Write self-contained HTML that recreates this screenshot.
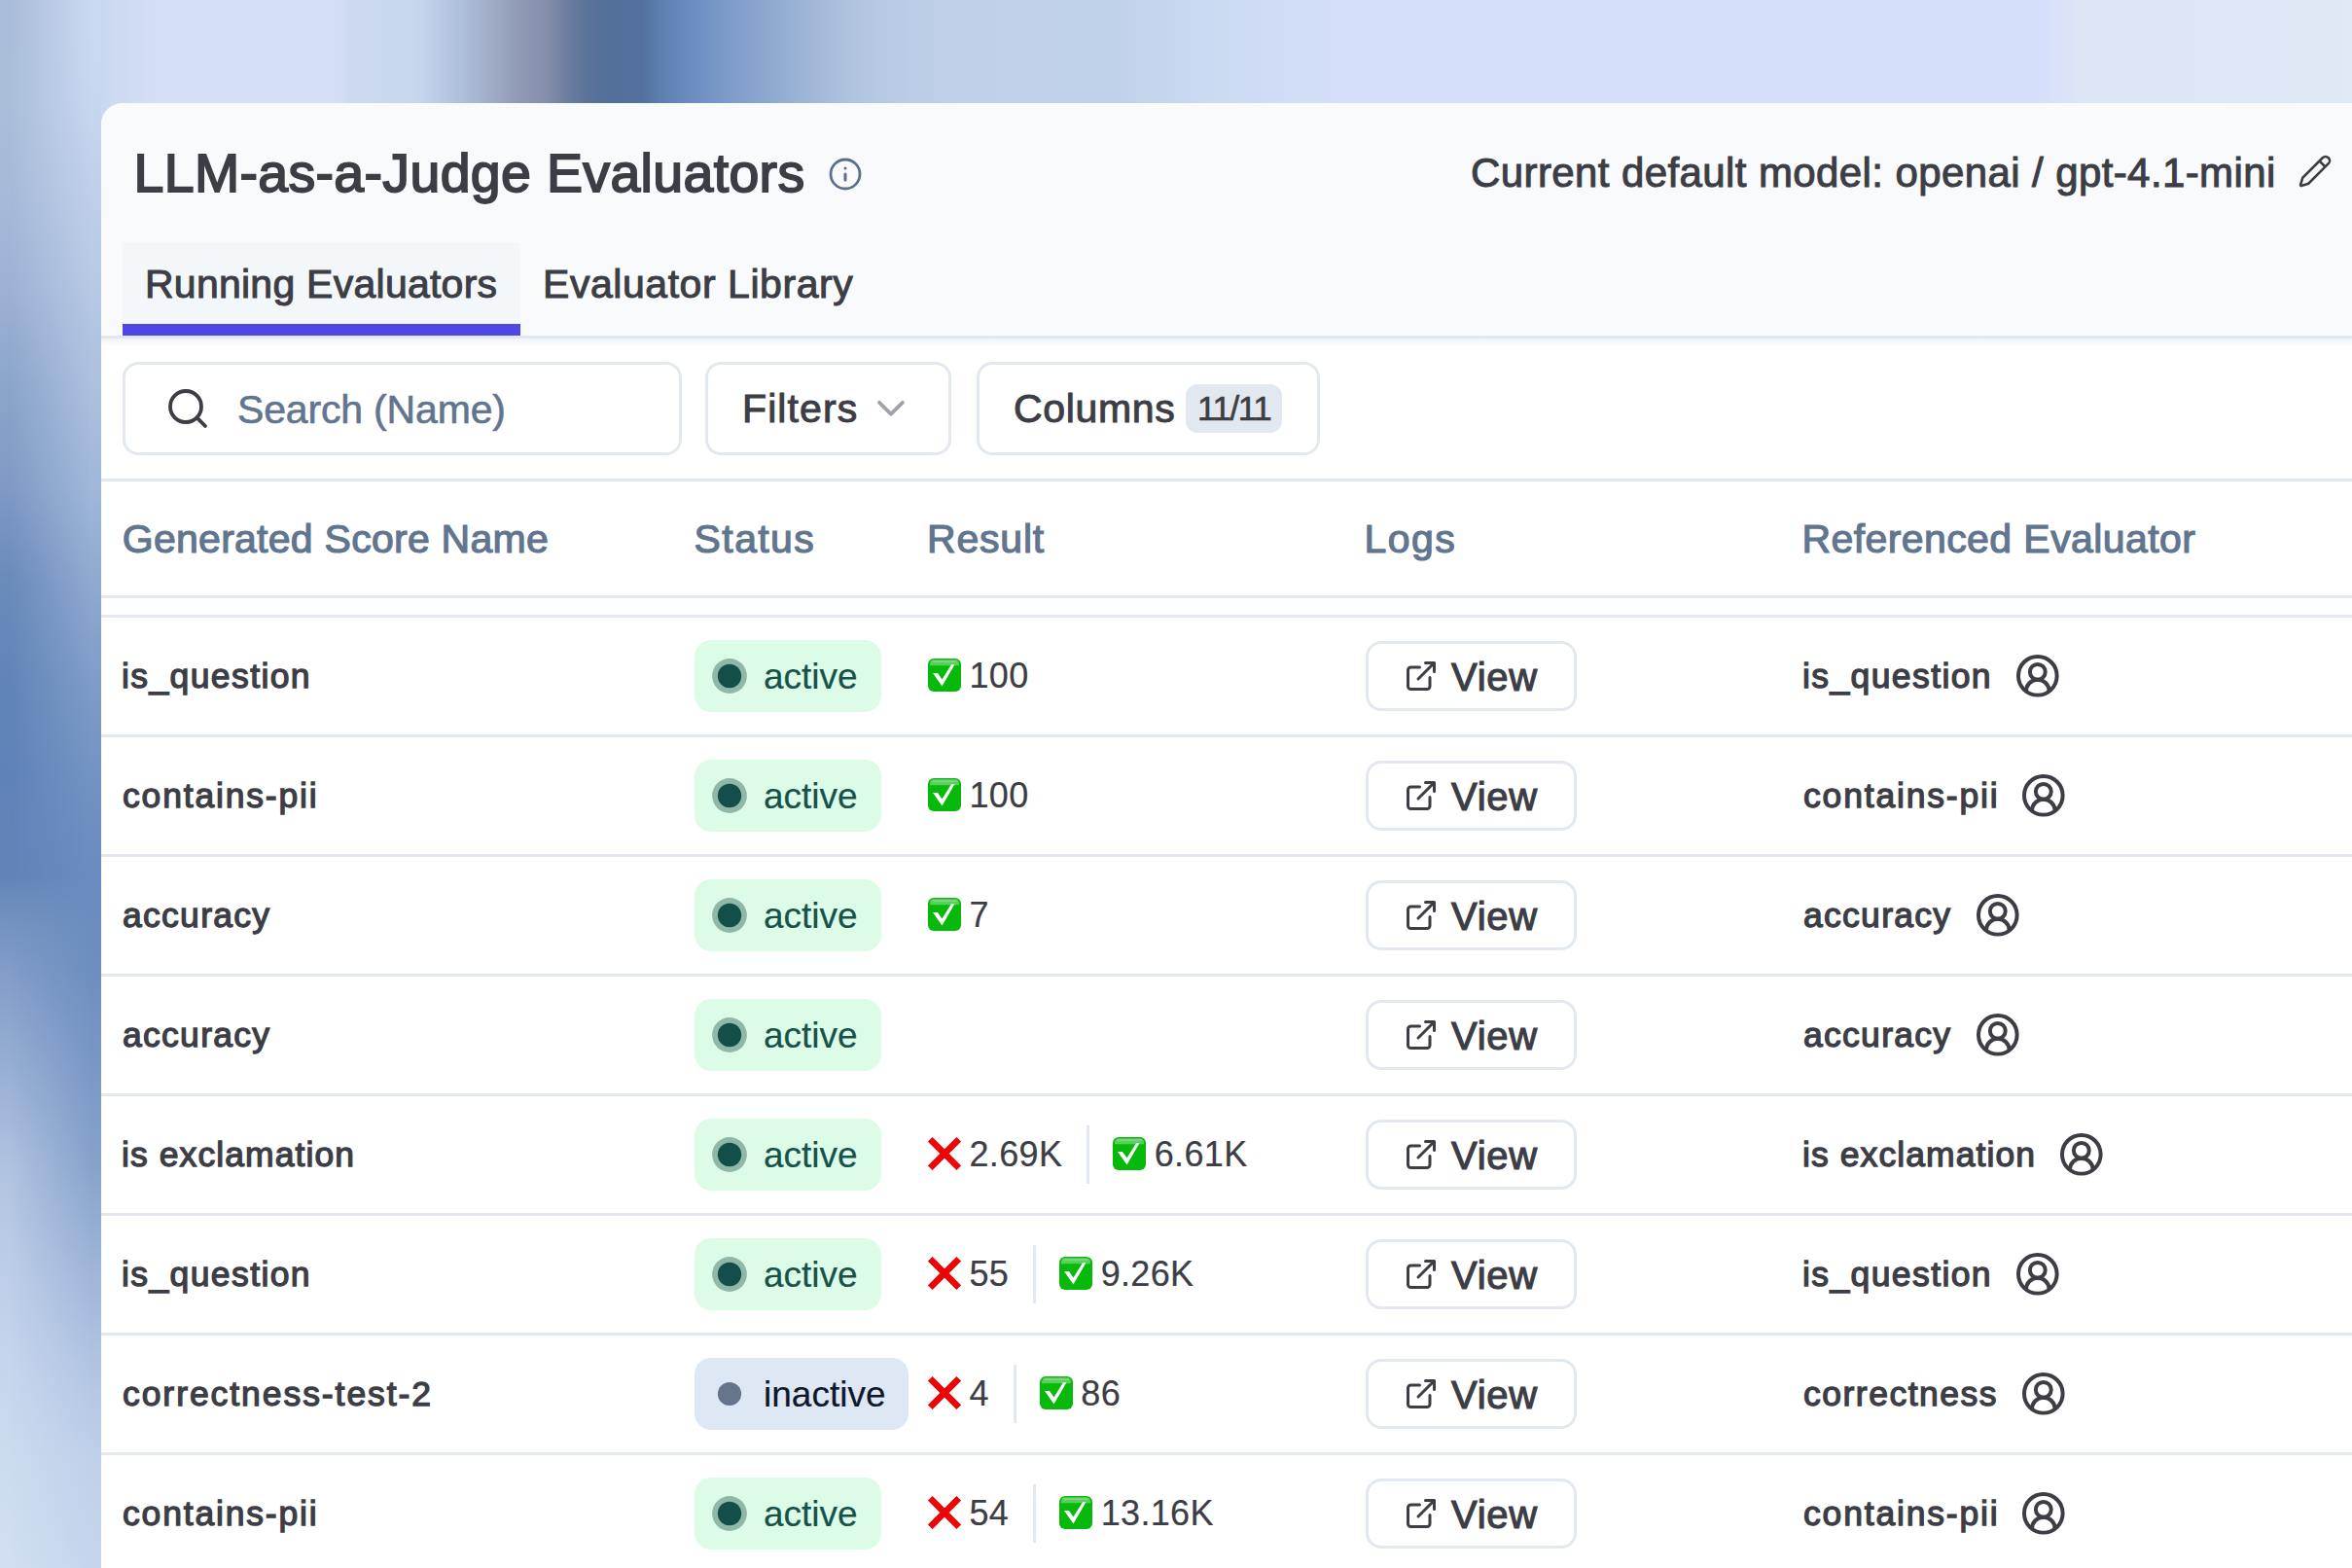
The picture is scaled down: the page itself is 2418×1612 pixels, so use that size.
<!DOCTYPE html>
<html><head><meta charset="utf-8"><style>
html,body{margin:0;padding:0;}
body{width:2418px;height:1612px;overflow:hidden;position:relative;background:#d5dff8;font-family:"Liberation Sans", sans-serif;}
.t{position:absolute;white-space:pre;}
.r{position:absolute;}
svg.r{display:block;overflow:visible;}
</style></head><body>
<div class="r" style="left:0.00px;top:0.00px;width:2418.00px;height:260.00px;background:linear-gradient(to right,#a5b8d6 0.00%,#b3c4e0 1.24%,#c3d2eb 2.89%,#cddaf2 4.96%,#d5def7 6.62%,#d6dff8 12.41%,#d4def6 14.47%,#cbd8ef 14.97%,#c9d7ee 17.58%,#bfcee7 18.40%,#aebfd9 19.64%,#a0acc6 20.89%,#939cb6 21.92%,#8a93ae 22.75%,#828ba8 23.37%,#6b7d9f 24.19%,#5a7299 25.02%,#52709a 25.85%,#53719c 27.30%,#5d7fb0 28.12%,#6a8cc0 29.36%,#7e9cc9 31.02%,#92acd2 33.09%,#a4bad9 34.95%,#b2c5e0 36.39%,#bccde6 38.88%,#bfd0e8 41.36%,#c0d2e9 47.56%,#ccdaf2 51.70%,#d6dff9 57.90%,#d6dff9 86.85%,#dde6f5 88.50%,#dfe8f5 100.00%);"></div>
<svg class="r" style="left:0.00px;top:0.00px;" width="104" height="1612" viewBox="0 0 104 1612"><defs><linearGradient id="lgL" x1="0" y1="0" x2="0" y2="1"><stop offset="0.0000" stop-color="#a9bcd9"/><stop offset="0.0620" stop-color="#aabeda"/><stop offset="0.1241" stop-color="#a6bad9"/><stop offset="0.1861" stop-color="#9cb2d4"/><stop offset="0.2481" stop-color="#8ba4cb"/><stop offset="0.3102" stop-color="#7f9ac5"/><stop offset="0.3722" stop-color="#6a8abb"/><stop offset="0.4342" stop-color="#6184b8"/><stop offset="0.4963" stop-color="#5f83b8"/><stop offset="0.5583" stop-color="#6283b8"/><stop offset="0.5893" stop-color="#7593c0"/><stop offset="0.6203" stop-color="#819dc8"/><stop offset="0.6824" stop-color="#98afd4"/><stop offset="0.7444" stop-color="#b0c3e0"/><stop offset="0.8065" stop-color="#bccde7"/><stop offset="0.8685" stop-color="#c6d5ec"/><stop offset="0.9305" stop-color="#cddbef"/><stop offset="1.0000" stop-color="#d2dff2"/></linearGradient><linearGradient id="lgR" x1="0" y1="0" x2="0" y2="1"><stop offset="0.0000" stop-color="#cbd9f0"/><stop offset="0.0620" stop-color="#c8d7ef"/><stop offset="0.1241" stop-color="#bfcfe9"/><stop offset="0.1861" stop-color="#b6c8e4"/><stop offset="0.2481" stop-color="#abc0de"/><stop offset="0.3102" stop-color="#a0b7d9"/><stop offset="0.3722" stop-color="#8fa9d0"/><stop offset="0.4342" stop-color="#7f9cc8"/><stop offset="0.4963" stop-color="#7292c3"/><stop offset="0.5583" stop-color="#6a8bbf"/><stop offset="0.6203" stop-color="#6e8ec0"/><stop offset="0.6824" stop-color="#7a98c6"/><stop offset="0.7444" stop-color="#87a3cc"/><stop offset="0.8065" stop-color="#9db4d8"/><stop offset="0.8685" stop-color="#b0c4e2"/><stop offset="0.9305" stop-color="#bfd0e8"/><stop offset="1.0000" stop-color="#c5d5ec"/></linearGradient><linearGradient id="mg" x1="0" y1="0" x2="1" y2="0"><stop offset="0.1" stop-color="#000"/><stop offset="0.9" stop-color="#fff"/></linearGradient><mask id="mk" maskUnits="userSpaceOnUse" x="0" y="0" width="104" height="1612"><rect x="0" y="0" width="104" height="1612" fill="url(#mg)"/></mask></defs><rect x="0" y="0" width="104" height="1612" fill="url(#lgL)"/><rect x="0" y="0" width="104" height="1612" fill="url(#lgR)" mask="url(#mk)"/></svg>
<div class="r" style="left:104px;top:106px;width:2354px;height:1546px;border-top-left-radius:22px;background:#ffffff;overflow:hidden;"><div style="position:absolute;left:0;top:0;right:0;height:239px;background:#f8fafc"></div></div>
<div class="r" style="left:104.00px;top:345.00px;width:2314.00px;height:3.00px;background:#e2e8f0;"></div>
<div class="r" style="left:104.00px;top:348.00px;width:2314.00px;height:9.00px;background:linear-gradient(to bottom,#f1f5f9,rgba(255,255,255,0));"></div>
<div class="t" style="left:137.50px;top:151.22px;font-size:55.5px;line-height:55.5px;font-weight:400;color:#3c3d45;letter-spacing:0.33px;-webkit-text-stroke:1.8px #3c3d45;">LLM-as-a-Judge Evaluators</div>
<svg class="r" style="left:851.00px;top:161.00px;" width="36" height="36" viewBox="0 0 24 24"><circle cx="12" cy="12" r="10" fill="none" stroke="#5b6f8a" stroke-width="1.85"/><path d="M12 16v-4M12 8h.01" fill="none" stroke="#5b6f8a" stroke-width="2" stroke-linecap="round"/></svg>
<div class="t" style="left:1512.00px;top:157.25px;font-size:42px;line-height:42px;font-weight:400;color:#3c3d45;letter-spacing:0.4px;-webkit-text-stroke:1.0px #3c3d45;">Current default model: openai / gpt-4.1-mini</div>
<svg class="r" style="left:2362.00px;top:157.50px;" width="36" height="36" viewBox="0 0 24 24"><path d="M21.174 6.812a1 1 0 0 0-3.986-3.987L3.842 16.174a2 2 0 0 0-.5.83l-1.321 4.352a.5.5 0 0 0 .623.622l4.353-1.32a2 2 0 0 0 .83-.497z" fill="none" stroke="#3c3d45" stroke-width="1.7" stroke-linejoin="round"/><path d="m15 5 4 4" fill="none" stroke="#3c3d45" stroke-width="1.7"/></svg>
<div class="r" style="left:126.00px;top:248.70px;width:409.00px;height:84.30px;background:#f3f7fa;"></div>
<div class="r" style="left:126.00px;top:333.00px;width:409.00px;height:12.00px;background:#4f46e5;"></div>
<div class="t" style="left:149.00px;top:271.89px;font-size:41px;line-height:41px;font-weight:400;color:#3c3d45;letter-spacing:0.25px;-webkit-text-stroke:1.0px #3c3d45;">Running Evaluators</div>
<div class="t" style="left:558.00px;top:271.89px;font-size:41px;line-height:41px;font-weight:400;color:#3c3d45;letter-spacing:0.55px;-webkit-text-stroke:1.0px #3c3d45;">Evaluator Library</div>
<div class="r" style="left:126.00px;top:372.00px;width:575.00px;height:95.50px;box-sizing:border-box;border:3px solid #e2e8f0;border-radius:16px;background:#fff;"></div>
<svg class="r" style="left:169.00px;top:396.00px;" width="48" height="48" viewBox="0 0 24 24"><circle cx="11" cy="11" r="8" fill="none" stroke="#3c3d45" stroke-width="1.9"/><path d="m21 21-4.3-4.3" fill="none" stroke="#3c3d45" stroke-width="1.9" stroke-linecap="round"/></svg>
<div class="t" style="left:244.00px;top:401.29px;font-size:41px;line-height:41px;font-weight:400;color:#62758f;letter-spacing:-0.17px;-webkit-text-stroke:0.6px #62758f;">Search (Name)</div>
<div class="r" style="left:725.40px;top:372.00px;width:253.10px;height:95.50px;box-sizing:border-box;border:3px solid #e2e8f0;border-radius:16px;background:#fff;"></div>
<div class="t" style="left:763.00px;top:400.29px;font-size:41px;line-height:41px;font-weight:400;color:#3c3d45;letter-spacing:1.1px;-webkit-text-stroke:1.0px #3c3d45;">Filters</div>
<svg class="r" style="left:890.00px;top:395.00px;" width="55" height="50" viewBox="0 0 55 50"><path d="M14 18.8 L25.9 30.7 L37.9 18.8" fill="none" stroke="#a1a1aa" stroke-width="3.8" stroke-linecap="round" stroke-linejoin="round"/></svg>
<div class="r" style="left:1003.80px;top:372.00px;width:353.60px;height:95.50px;box-sizing:border-box;border:3px solid #e2e8f0;border-radius:16px;background:#fff;"></div>
<div class="t" style="left:1042.00px;top:400.29px;font-size:41px;line-height:41px;font-weight:400;color:#3c3d45;letter-spacing:0.65px;-webkit-text-stroke:1.0px #3c3d45;">Columns</div>
<div class="r" style="left:1219.00px;top:395.00px;width:99.00px;height:49.70px;background:#e2e8f0;border-radius:12px;"></div>
<div class="t" style="left:1231.00px;top:402.17px;font-size:35px;line-height:35px;font-weight:400;color:#3c3d45;letter-spacing:-1.4px;-webkit-text-stroke:0.6px #3c3d45;">11/11</div>
<div class="r" style="left:104.00px;top:492.00px;width:2314.00px;height:3.00px;background:#e2e8f0;"></div>
<div class="t" style="left:125.80px;top:533.79px;font-size:41px;line-height:41px;font-weight:400;color:#62758f;letter-spacing:0.26px;-webkit-text-stroke:1.2px #62758f;">Generated Score Name</div>
<div class="t" style="left:713.60px;top:533.79px;font-size:41px;line-height:41px;font-weight:400;color:#62758f;letter-spacing:1.4px;-webkit-text-stroke:1.2px #62758f;">Status</div>
<div class="t" style="left:953.00px;top:533.79px;font-size:41px;line-height:41px;font-weight:400;color:#62758f;letter-spacing:0.8px;-webkit-text-stroke:1.2px #62758f;">Result</div>
<div class="t" style="left:1402.40px;top:533.79px;font-size:41px;line-height:41px;font-weight:400;color:#62758f;letter-spacing:1.5px;-webkit-text-stroke:1.2px #62758f;">Logs</div>
<div class="t" style="left:1852.40px;top:533.79px;font-size:41px;line-height:41px;font-weight:400;color:#62758f;letter-spacing:0.42px;-webkit-text-stroke:1.2px #62758f;">Referenced Evaluator</div>
<div class="r" style="left:104.00px;top:612.00px;width:2314.00px;height:3.00px;background:#e2e8f0;"></div>
<div class="r" style="left:104.00px;top:615.00px;width:2314.00px;height:17.00px;background:#fefefe;"></div>
<div class="r" style="left:104.00px;top:632.00px;width:2314.00px;height:3.00px;background:#e2e8f0;"></div>
<div class="t" style="left:125.00px;top:678.45px;font-size:35.5px;line-height:35.5px;font-weight:400;color:#3c3d45;letter-spacing:1.4px;-webkit-text-stroke:1.3px #3c3d45;">is_question</div>
<div class="r" style="left:714.00px;top:657.90px;width:192.00px;height:73.90px;background:#dcfce7;border-radius:17px;"></div>
<svg class="r" style="left:732.00px;top:677.00px;" width="36" height="36" viewBox="0 0 36 36"><circle cx="18" cy="18" r="17.9" fill="#8fb8a8"/><circle cx="18" cy="18" r="12.2" fill="#134e48"/></svg>
<div class="t" style="left:785.00px;top:677.18px;font-size:37px;line-height:37px;font-weight:400;color:#16524a;letter-spacing:0px;-webkit-text-stroke:0.2px #16524a;">active</div>
<div class="r" style="left:954px;top:655px;height:80px;display:flex;align-items:center;font-family:"Liberation Sans", sans-serif;white-space:pre"><svg width="34" height="34" viewBox="0 0 34 34" style="display:block;flex:none;margin-right:8.5px;position:relative;top:-1.2px"><rect x="0" y="0" width="34" height="34" rx="6" fill="#07b90a"/><path d="M2 7.2 V5.5 A4.5 4.5 0 0 1 6.5 1.2 H27.5 A4.5 4.5 0 0 1 32 5.5 V7.2 Z" fill="#52d452"/><path d="M4.5 2.2 H29.5 V4.2 H4.5Z" fill="#a3c8ad" opacity="0.7"/><path d="M5 14.9 L10 14.9 L14.5 21.6 L24 6.2 L27.4 6.2 L14.5 28.6 Z" fill="#fff"/></svg><span style="font-size:36px;letter-spacing:0.35px;color:#3c3d45;-webkit-text-stroke:0.2px #3c3d45">100</span></div>
<div class="r" style="left:1404.10px;top:659.00px;width:216.80px;height:71.80px;box-sizing:border-box;border:3px solid #e2e8f0;border-radius:16px;background:#fff;"></div>
<svg class="r" style="left:1443.00px;top:676.60px;" width="36" height="36" viewBox="0 0 24 24"><path d="M15 3h6v6M10 14 21 3M18 13v6a2 2 0 0 1-2 2H5a2 2 0 0 1-2-2V8a2 2 0 0 1 2-2h6" fill="none" stroke="#3c3d45" stroke-width="2" stroke-linecap="round" stroke-linejoin="round"/></svg>
<div class="t" style="left:1492.00px;top:676.14px;font-size:40px;line-height:40px;font-weight:400;color:#3c3d45;letter-spacing:0.7px;-webkit-text-stroke:1.15px #3c3d45;">View</div>
<div class="t" style="left:1853.00px;top:678.45px;font-size:35.5px;line-height:35.5px;font-weight:400;color:#3c3d45;letter-spacing:1.4px;-webkit-text-stroke:1.3px #3c3d45;">is_question</div>
<svg class="r" style="left:2071.30px;top:671.00px;" width="47.6" height="47.6" viewBox="0 0 24 24"><path d="M18 20a6 6 0 0 0-12 0" fill="none" stroke="#3c3d45" stroke-width="2"/><circle cx="12" cy="10" r="4" fill="none" stroke="#3c3d45" stroke-width="2"/><circle cx="12" cy="12" r="10" fill="none" stroke="#3c3d45" stroke-width="2"/></svg>
<div class="r" style="left:104.00px;top:755.00px;width:2314.00px;height:3.00px;background:#e2e8f0;"></div>
<div class="t" style="left:126.00px;top:801.45px;font-size:35.5px;line-height:35.5px;font-weight:400;color:#3c3d45;letter-spacing:1.82px;-webkit-text-stroke:1.3px #3c3d45;">contains-pii</div>
<div class="r" style="left:714.00px;top:780.90px;width:192.00px;height:73.90px;background:#dcfce7;border-radius:17px;"></div>
<svg class="r" style="left:732.00px;top:800.00px;" width="36" height="36" viewBox="0 0 36 36"><circle cx="18" cy="18" r="17.9" fill="#8fb8a8"/><circle cx="18" cy="18" r="12.2" fill="#134e48"/></svg>
<div class="t" style="left:785.00px;top:800.18px;font-size:37px;line-height:37px;font-weight:400;color:#16524a;letter-spacing:0px;-webkit-text-stroke:0.2px #16524a;">active</div>
<div class="r" style="left:954px;top:778px;height:80px;display:flex;align-items:center;font-family:"Liberation Sans", sans-serif;white-space:pre"><svg width="34" height="34" viewBox="0 0 34 34" style="display:block;flex:none;margin-right:8.5px;position:relative;top:-1.2px"><rect x="0" y="0" width="34" height="34" rx="6" fill="#07b90a"/><path d="M2 7.2 V5.5 A4.5 4.5 0 0 1 6.5 1.2 H27.5 A4.5 4.5 0 0 1 32 5.5 V7.2 Z" fill="#52d452"/><path d="M4.5 2.2 H29.5 V4.2 H4.5Z" fill="#a3c8ad" opacity="0.7"/><path d="M5 14.9 L10 14.9 L14.5 21.6 L24 6.2 L27.4 6.2 L14.5 28.6 Z" fill="#fff"/></svg><span style="font-size:36px;letter-spacing:0.35px;color:#3c3d45;-webkit-text-stroke:0.2px #3c3d45">100</span></div>
<div class="r" style="left:1404.10px;top:782.00px;width:216.80px;height:71.80px;box-sizing:border-box;border:3px solid #e2e8f0;border-radius:16px;background:#fff;"></div>
<svg class="r" style="left:1443.00px;top:799.60px;" width="36" height="36" viewBox="0 0 24 24"><path d="M15 3h6v6M10 14 21 3M18 13v6a2 2 0 0 1-2 2H5a2 2 0 0 1-2-2V8a2 2 0 0 1 2-2h6" fill="none" stroke="#3c3d45" stroke-width="2" stroke-linecap="round" stroke-linejoin="round"/></svg>
<div class="t" style="left:1492.00px;top:799.14px;font-size:40px;line-height:40px;font-weight:400;color:#3c3d45;letter-spacing:0.7px;-webkit-text-stroke:1.15px #3c3d45;">View</div>
<div class="t" style="left:1854.00px;top:801.45px;font-size:35.5px;line-height:35.5px;font-weight:400;color:#3c3d45;letter-spacing:1.82px;-webkit-text-stroke:1.3px #3c3d45;">contains-pii</div>
<svg class="r" style="left:2077.10px;top:794.00px;" width="47.6" height="47.6" viewBox="0 0 24 24"><path d="M18 20a6 6 0 0 0-12 0" fill="none" stroke="#3c3d45" stroke-width="2"/><circle cx="12" cy="10" r="4" fill="none" stroke="#3c3d45" stroke-width="2"/><circle cx="12" cy="12" r="10" fill="none" stroke="#3c3d45" stroke-width="2"/></svg>
<div class="r" style="left:104.00px;top:878.00px;width:2314.00px;height:3.00px;background:#e2e8f0;"></div>
<div class="t" style="left:126.00px;top:924.45px;font-size:35.5px;line-height:35.5px;font-weight:400;color:#3c3d45;letter-spacing:1.29px;-webkit-text-stroke:1.3px #3c3d45;">accuracy</div>
<div class="r" style="left:714.00px;top:903.90px;width:192.00px;height:73.90px;background:#dcfce7;border-radius:17px;"></div>
<svg class="r" style="left:732.00px;top:923.00px;" width="36" height="36" viewBox="0 0 36 36"><circle cx="18" cy="18" r="17.9" fill="#8fb8a8"/><circle cx="18" cy="18" r="12.2" fill="#134e48"/></svg>
<div class="t" style="left:785.00px;top:923.18px;font-size:37px;line-height:37px;font-weight:400;color:#16524a;letter-spacing:0px;-webkit-text-stroke:0.2px #16524a;">active</div>
<div class="r" style="left:954px;top:901px;height:80px;display:flex;align-items:center;font-family:"Liberation Sans", sans-serif;white-space:pre"><svg width="34" height="34" viewBox="0 0 34 34" style="display:block;flex:none;margin-right:8.5px;position:relative;top:-1.2px"><rect x="0" y="0" width="34" height="34" rx="6" fill="#07b90a"/><path d="M2 7.2 V5.5 A4.5 4.5 0 0 1 6.5 1.2 H27.5 A4.5 4.5 0 0 1 32 5.5 V7.2 Z" fill="#52d452"/><path d="M4.5 2.2 H29.5 V4.2 H4.5Z" fill="#a3c8ad" opacity="0.7"/><path d="M5 14.9 L10 14.9 L14.5 21.6 L24 6.2 L27.4 6.2 L14.5 28.6 Z" fill="#fff"/></svg><span style="font-size:36px;letter-spacing:0.35px;color:#3c3d45;-webkit-text-stroke:0.2px #3c3d45">7</span></div>
<div class="r" style="left:1404.10px;top:905.00px;width:216.80px;height:71.80px;box-sizing:border-box;border:3px solid #e2e8f0;border-radius:16px;background:#fff;"></div>
<svg class="r" style="left:1443.00px;top:922.60px;" width="36" height="36" viewBox="0 0 24 24"><path d="M15 3h6v6M10 14 21 3M18 13v6a2 2 0 0 1-2 2H5a2 2 0 0 1-2-2V8a2 2 0 0 1 2-2h6" fill="none" stroke="#3c3d45" stroke-width="2" stroke-linecap="round" stroke-linejoin="round"/></svg>
<div class="t" style="left:1492.00px;top:922.14px;font-size:40px;line-height:40px;font-weight:400;color:#3c3d45;letter-spacing:0.7px;-webkit-text-stroke:1.15px #3c3d45;">View</div>
<div class="t" style="left:1854.00px;top:924.45px;font-size:35.5px;line-height:35.5px;font-weight:400;color:#3c3d45;letter-spacing:1.29px;-webkit-text-stroke:1.3px #3c3d45;">accuracy</div>
<svg class="r" style="left:2030.20px;top:917.00px;" width="47.6" height="47.6" viewBox="0 0 24 24"><path d="M18 20a6 6 0 0 0-12 0" fill="none" stroke="#3c3d45" stroke-width="2"/><circle cx="12" cy="10" r="4" fill="none" stroke="#3c3d45" stroke-width="2"/><circle cx="12" cy="12" r="10" fill="none" stroke="#3c3d45" stroke-width="2"/></svg>
<div class="r" style="left:104.00px;top:1001.00px;width:2314.00px;height:3.00px;background:#e2e8f0;"></div>
<div class="t" style="left:126.00px;top:1047.45px;font-size:35.5px;line-height:35.5px;font-weight:400;color:#3c3d45;letter-spacing:1.29px;-webkit-text-stroke:1.3px #3c3d45;">accuracy</div>
<div class="r" style="left:714.00px;top:1026.90px;width:192.00px;height:73.90px;background:#dcfce7;border-radius:17px;"></div>
<svg class="r" style="left:732.00px;top:1046.00px;" width="36" height="36" viewBox="0 0 36 36"><circle cx="18" cy="18" r="17.9" fill="#8fb8a8"/><circle cx="18" cy="18" r="12.2" fill="#134e48"/></svg>
<div class="t" style="left:785.00px;top:1046.18px;font-size:37px;line-height:37px;font-weight:400;color:#16524a;letter-spacing:0px;-webkit-text-stroke:0.2px #16524a;">active</div>
<div class="r" style="left:1404.10px;top:1028.00px;width:216.80px;height:71.80px;box-sizing:border-box;border:3px solid #e2e8f0;border-radius:16px;background:#fff;"></div>
<svg class="r" style="left:1443.00px;top:1045.60px;" width="36" height="36" viewBox="0 0 24 24"><path d="M15 3h6v6M10 14 21 3M18 13v6a2 2 0 0 1-2 2H5a2 2 0 0 1-2-2V8a2 2 0 0 1 2-2h6" fill="none" stroke="#3c3d45" stroke-width="2" stroke-linecap="round" stroke-linejoin="round"/></svg>
<div class="t" style="left:1492.00px;top:1045.14px;font-size:40px;line-height:40px;font-weight:400;color:#3c3d45;letter-spacing:0.7px;-webkit-text-stroke:1.15px #3c3d45;">View</div>
<div class="t" style="left:1854.00px;top:1047.45px;font-size:35.5px;line-height:35.5px;font-weight:400;color:#3c3d45;letter-spacing:1.29px;-webkit-text-stroke:1.3px #3c3d45;">accuracy</div>
<svg class="r" style="left:2030.20px;top:1040.00px;" width="47.6" height="47.6" viewBox="0 0 24 24"><path d="M18 20a6 6 0 0 0-12 0" fill="none" stroke="#3c3d45" stroke-width="2"/><circle cx="12" cy="10" r="4" fill="none" stroke="#3c3d45" stroke-width="2"/><circle cx="12" cy="12" r="10" fill="none" stroke="#3c3d45" stroke-width="2"/></svg>
<div class="r" style="left:104.00px;top:1124.00px;width:2314.00px;height:3.00px;background:#e2e8f0;"></div>
<div class="t" style="left:125.00px;top:1170.45px;font-size:35.5px;line-height:35.5px;font-weight:400;color:#3c3d45;letter-spacing:1.08px;-webkit-text-stroke:1.3px #3c3d45;">is exclamation</div>
<div class="r" style="left:714.00px;top:1149.90px;width:192.00px;height:73.90px;background:#dcfce7;border-radius:17px;"></div>
<svg class="r" style="left:732.00px;top:1169.00px;" width="36" height="36" viewBox="0 0 36 36"><circle cx="18" cy="18" r="17.9" fill="#8fb8a8"/><circle cx="18" cy="18" r="12.2" fill="#134e48"/></svg>
<div class="t" style="left:785.00px;top:1169.18px;font-size:37px;line-height:37px;font-weight:400;color:#16524a;letter-spacing:0px;-webkit-text-stroke:0.2px #16524a;">active</div>
<div class="r" style="left:954px;top:1147px;height:80px;display:flex;align-items:center;font-family:"Liberation Sans", sans-serif;white-space:pre"><svg width="34" height="34" viewBox="0 0 34 34" style="display:block;flex:none;margin-right:8.5px;position:relative;top:-1.2px"><path d="M2.3 2.3 L31.7 31.7 M31.7 2.3 L2.3 31.7" stroke="#ec0505" stroke-width="6.6"/></svg><span style="font-size:36px;letter-spacing:0.35px;color:#3c3d45;-webkit-text-stroke:0.2px #3c3d45">2.69K</span><span style="display:inline-block;width:3px;height:60px;background:#e2e8f0;margin:0 24px 0 24.9px;"></span><svg width="34" height="34" viewBox="0 0 34 34" style="display:block;flex:none;margin-right:8.5px;position:relative;top:-1.2px"><rect x="0" y="0" width="34" height="34" rx="6" fill="#07b90a"/><path d="M2 7.2 V5.5 A4.5 4.5 0 0 1 6.5 1.2 H27.5 A4.5 4.5 0 0 1 32 5.5 V7.2 Z" fill="#52d452"/><path d="M4.5 2.2 H29.5 V4.2 H4.5Z" fill="#a3c8ad" opacity="0.7"/><path d="M5 14.9 L10 14.9 L14.5 21.6 L24 6.2 L27.4 6.2 L14.5 28.6 Z" fill="#fff"/></svg><span style="font-size:36px;letter-spacing:0.35px;color:#3c3d45;-webkit-text-stroke:0.2px #3c3d45">6.61K</span></div>
<div class="r" style="left:1404.10px;top:1151.00px;width:216.80px;height:71.80px;box-sizing:border-box;border:3px solid #e2e8f0;border-radius:16px;background:#fff;"></div>
<svg class="r" style="left:1443.00px;top:1168.60px;" width="36" height="36" viewBox="0 0 24 24"><path d="M15 3h6v6M10 14 21 3M18 13v6a2 2 0 0 1-2 2H5a2 2 0 0 1-2-2V8a2 2 0 0 1 2-2h6" fill="none" stroke="#3c3d45" stroke-width="2" stroke-linecap="round" stroke-linejoin="round"/></svg>
<div class="t" style="left:1492.00px;top:1168.14px;font-size:40px;line-height:40px;font-weight:400;color:#3c3d45;letter-spacing:0.7px;-webkit-text-stroke:1.15px #3c3d45;">View</div>
<div class="t" style="left:1853.00px;top:1170.45px;font-size:35.5px;line-height:35.5px;font-weight:400;color:#3c3d45;letter-spacing:1.08px;-webkit-text-stroke:1.3px #3c3d45;">is exclamation</div>
<svg class="r" style="left:2116.20px;top:1163.00px;" width="47.6" height="47.6" viewBox="0 0 24 24"><path d="M18 20a6 6 0 0 0-12 0" fill="none" stroke="#3c3d45" stroke-width="2"/><circle cx="12" cy="10" r="4" fill="none" stroke="#3c3d45" stroke-width="2"/><circle cx="12" cy="12" r="10" fill="none" stroke="#3c3d45" stroke-width="2"/></svg>
<div class="r" style="left:104.00px;top:1247.00px;width:2314.00px;height:3.00px;background:#e2e8f0;"></div>
<div class="t" style="left:125.00px;top:1293.45px;font-size:35.5px;line-height:35.5px;font-weight:400;color:#3c3d45;letter-spacing:1.4px;-webkit-text-stroke:1.3px #3c3d45;">is_question</div>
<div class="r" style="left:714.00px;top:1272.90px;width:192.00px;height:73.90px;background:#dcfce7;border-radius:17px;"></div>
<svg class="r" style="left:732.00px;top:1292.00px;" width="36" height="36" viewBox="0 0 36 36"><circle cx="18" cy="18" r="17.9" fill="#8fb8a8"/><circle cx="18" cy="18" r="12.2" fill="#134e48"/></svg>
<div class="t" style="left:785.00px;top:1292.18px;font-size:37px;line-height:37px;font-weight:400;color:#16524a;letter-spacing:0px;-webkit-text-stroke:0.2px #16524a;">active</div>
<div class="r" style="left:954px;top:1270px;height:80px;display:flex;align-items:center;font-family:"Liberation Sans", sans-serif;white-space:pre"><svg width="34" height="34" viewBox="0 0 34 34" style="display:block;flex:none;margin-right:8.5px;position:relative;top:-1.2px"><path d="M2.3 2.3 L31.7 31.7 M31.7 2.3 L2.3 31.7" stroke="#ec0505" stroke-width="6.6"/></svg><span style="font-size:36px;letter-spacing:0.35px;color:#3c3d45;-webkit-text-stroke:0.2px #3c3d45">55</span><span style="display:inline-block;width:3px;height:60px;background:#e2e8f0;margin:0 24px 0 24.9px;"></span><svg width="34" height="34" viewBox="0 0 34 34" style="display:block;flex:none;margin-right:8.5px;position:relative;top:-1.2px"><rect x="0" y="0" width="34" height="34" rx="6" fill="#07b90a"/><path d="M2 7.2 V5.5 A4.5 4.5 0 0 1 6.5 1.2 H27.5 A4.5 4.5 0 0 1 32 5.5 V7.2 Z" fill="#52d452"/><path d="M4.5 2.2 H29.5 V4.2 H4.5Z" fill="#a3c8ad" opacity="0.7"/><path d="M5 14.9 L10 14.9 L14.5 21.6 L24 6.2 L27.4 6.2 L14.5 28.6 Z" fill="#fff"/></svg><span style="font-size:36px;letter-spacing:0.35px;color:#3c3d45;-webkit-text-stroke:0.2px #3c3d45">9.26K</span></div>
<div class="r" style="left:1404.10px;top:1274.00px;width:216.80px;height:71.80px;box-sizing:border-box;border:3px solid #e2e8f0;border-radius:16px;background:#fff;"></div>
<svg class="r" style="left:1443.00px;top:1291.60px;" width="36" height="36" viewBox="0 0 24 24"><path d="M15 3h6v6M10 14 21 3M18 13v6a2 2 0 0 1-2 2H5a2 2 0 0 1-2-2V8a2 2 0 0 1 2-2h6" fill="none" stroke="#3c3d45" stroke-width="2" stroke-linecap="round" stroke-linejoin="round"/></svg>
<div class="t" style="left:1492.00px;top:1291.14px;font-size:40px;line-height:40px;font-weight:400;color:#3c3d45;letter-spacing:0.7px;-webkit-text-stroke:1.15px #3c3d45;">View</div>
<div class="t" style="left:1853.00px;top:1293.45px;font-size:35.5px;line-height:35.5px;font-weight:400;color:#3c3d45;letter-spacing:1.4px;-webkit-text-stroke:1.3px #3c3d45;">is_question</div>
<svg class="r" style="left:2071.30px;top:1286.00px;" width="47.6" height="47.6" viewBox="0 0 24 24"><path d="M18 20a6 6 0 0 0-12 0" fill="none" stroke="#3c3d45" stroke-width="2"/><circle cx="12" cy="10" r="4" fill="none" stroke="#3c3d45" stroke-width="2"/><circle cx="12" cy="12" r="10" fill="none" stroke="#3c3d45" stroke-width="2"/></svg>
<div class="r" style="left:104.00px;top:1370.00px;width:2314.00px;height:3.00px;background:#e2e8f0;"></div>
<div class="t" style="left:126.00px;top:1416.45px;font-size:35.5px;line-height:35.5px;font-weight:400;color:#3c3d45;letter-spacing:1.94px;-webkit-text-stroke:1.3px #3c3d45;">correctness-test-2</div>
<div class="r" style="left:714.00px;top:1395.90px;width:219.80px;height:73.90px;background:#dee8f4;border-radius:17px;"></div>
<svg class="r" style="left:732.00px;top:1415.00px;" width="36" height="36" viewBox="0 0 36 36"><circle cx="18" cy="18" r="12.1" fill="#64748b"/></svg>
<div class="t" style="left:785.00px;top:1415.18px;font-size:37px;line-height:37px;font-weight:400;color:#0f172a;letter-spacing:0px;-webkit-text-stroke:0.2px #0f172a;">inactive</div>
<div class="r" style="left:954px;top:1393px;height:80px;display:flex;align-items:center;font-family:"Liberation Sans", sans-serif;white-space:pre"><svg width="34" height="34" viewBox="0 0 34 34" style="display:block;flex:none;margin-right:8.5px;position:relative;top:-1.2px"><path d="M2.3 2.3 L31.7 31.7 M31.7 2.3 L2.3 31.7" stroke="#ec0505" stroke-width="6.6"/></svg><span style="font-size:36px;letter-spacing:0.35px;color:#3c3d45;-webkit-text-stroke:0.2px #3c3d45">4</span><span style="display:inline-block;width:3px;height:60px;background:#e2e8f0;margin:0 24px 0 24.9px;"></span><svg width="34" height="34" viewBox="0 0 34 34" style="display:block;flex:none;margin-right:8.5px;position:relative;top:-1.2px"><rect x="0" y="0" width="34" height="34" rx="6" fill="#07b90a"/><path d="M2 7.2 V5.5 A4.5 4.5 0 0 1 6.5 1.2 H27.5 A4.5 4.5 0 0 1 32 5.5 V7.2 Z" fill="#52d452"/><path d="M4.5 2.2 H29.5 V4.2 H4.5Z" fill="#a3c8ad" opacity="0.7"/><path d="M5 14.9 L10 14.9 L14.5 21.6 L24 6.2 L27.4 6.2 L14.5 28.6 Z" fill="#fff"/></svg><span style="font-size:36px;letter-spacing:0.35px;color:#3c3d45;-webkit-text-stroke:0.2px #3c3d45">86</span></div>
<div class="r" style="left:1404.10px;top:1397.00px;width:216.80px;height:71.80px;box-sizing:border-box;border:3px solid #e2e8f0;border-radius:16px;background:#fff;"></div>
<svg class="r" style="left:1443.00px;top:1414.60px;" width="36" height="36" viewBox="0 0 24 24"><path d="M15 3h6v6M10 14 21 3M18 13v6a2 2 0 0 1-2 2H5a2 2 0 0 1-2-2V8a2 2 0 0 1 2-2h6" fill="none" stroke="#3c3d45" stroke-width="2" stroke-linecap="round" stroke-linejoin="round"/></svg>
<div class="t" style="left:1492.00px;top:1414.14px;font-size:40px;line-height:40px;font-weight:400;color:#3c3d45;letter-spacing:0.7px;-webkit-text-stroke:1.15px #3c3d45;">View</div>
<div class="t" style="left:1854.00px;top:1416.45px;font-size:35.5px;line-height:35.5px;font-weight:400;color:#3c3d45;letter-spacing:1.5px;-webkit-text-stroke:1.3px #3c3d45;">correctness</div>
<svg class="r" style="left:2077.20px;top:1409.00px;" width="47.6" height="47.6" viewBox="0 0 24 24"><path d="M18 20a6 6 0 0 0-12 0" fill="none" stroke="#3c3d45" stroke-width="2"/><circle cx="12" cy="10" r="4" fill="none" stroke="#3c3d45" stroke-width="2"/><circle cx="12" cy="12" r="10" fill="none" stroke="#3c3d45" stroke-width="2"/></svg>
<div class="r" style="left:104.00px;top:1493.00px;width:2314.00px;height:3.00px;background:#e2e8f0;"></div>
<div class="t" style="left:126.00px;top:1539.45px;font-size:35.5px;line-height:35.5px;font-weight:400;color:#3c3d45;letter-spacing:1.82px;-webkit-text-stroke:1.3px #3c3d45;">contains-pii</div>
<div class="r" style="left:714.00px;top:1518.90px;width:192.00px;height:73.90px;background:#dcfce7;border-radius:17px;"></div>
<svg class="r" style="left:732.00px;top:1538.00px;" width="36" height="36" viewBox="0 0 36 36"><circle cx="18" cy="18" r="17.9" fill="#8fb8a8"/><circle cx="18" cy="18" r="12.2" fill="#134e48"/></svg>
<div class="t" style="left:785.00px;top:1538.18px;font-size:37px;line-height:37px;font-weight:400;color:#16524a;letter-spacing:0px;-webkit-text-stroke:0.2px #16524a;">active</div>
<div class="r" style="left:954px;top:1516px;height:80px;display:flex;align-items:center;font-family:"Liberation Sans", sans-serif;white-space:pre"><svg width="34" height="34" viewBox="0 0 34 34" style="display:block;flex:none;margin-right:8.5px;position:relative;top:-1.2px"><path d="M2.3 2.3 L31.7 31.7 M31.7 2.3 L2.3 31.7" stroke="#ec0505" stroke-width="6.6"/></svg><span style="font-size:36px;letter-spacing:0.35px;color:#3c3d45;-webkit-text-stroke:0.2px #3c3d45">54</span><span style="display:inline-block;width:3px;height:60px;background:#e2e8f0;margin:0 24px 0 24.9px;"></span><svg width="34" height="34" viewBox="0 0 34 34" style="display:block;flex:none;margin-right:8.5px;position:relative;top:-1.2px"><rect x="0" y="0" width="34" height="34" rx="6" fill="#07b90a"/><path d="M2 7.2 V5.5 A4.5 4.5 0 0 1 6.5 1.2 H27.5 A4.5 4.5 0 0 1 32 5.5 V7.2 Z" fill="#52d452"/><path d="M4.5 2.2 H29.5 V4.2 H4.5Z" fill="#a3c8ad" opacity="0.7"/><path d="M5 14.9 L10 14.9 L14.5 21.6 L24 6.2 L27.4 6.2 L14.5 28.6 Z" fill="#fff"/></svg><span style="font-size:36px;letter-spacing:0.35px;color:#3c3d45;-webkit-text-stroke:0.2px #3c3d45">13.16K</span></div>
<div class="r" style="left:1404.10px;top:1520.00px;width:216.80px;height:71.80px;box-sizing:border-box;border:3px solid #e2e8f0;border-radius:16px;background:#fff;"></div>
<svg class="r" style="left:1443.00px;top:1537.60px;" width="36" height="36" viewBox="0 0 24 24"><path d="M15 3h6v6M10 14 21 3M18 13v6a2 2 0 0 1-2 2H5a2 2 0 0 1-2-2V8a2 2 0 0 1 2-2h6" fill="none" stroke="#3c3d45" stroke-width="2" stroke-linecap="round" stroke-linejoin="round"/></svg>
<div class="t" style="left:1492.00px;top:1537.14px;font-size:40px;line-height:40px;font-weight:400;color:#3c3d45;letter-spacing:0.7px;-webkit-text-stroke:1.15px #3c3d45;">View</div>
<div class="t" style="left:1854.00px;top:1539.45px;font-size:35.5px;line-height:35.5px;font-weight:400;color:#3c3d45;letter-spacing:1.82px;-webkit-text-stroke:1.3px #3c3d45;">contains-pii</div>
<svg class="r" style="left:2077.10px;top:1532.00px;" width="47.6" height="47.6" viewBox="0 0 24 24"><path d="M18 20a6 6 0 0 0-12 0" fill="none" stroke="#3c3d45" stroke-width="2"/><circle cx="12" cy="10" r="4" fill="none" stroke="#3c3d45" stroke-width="2"/><circle cx="12" cy="12" r="10" fill="none" stroke="#3c3d45" stroke-width="2"/></svg>
</body></html>
